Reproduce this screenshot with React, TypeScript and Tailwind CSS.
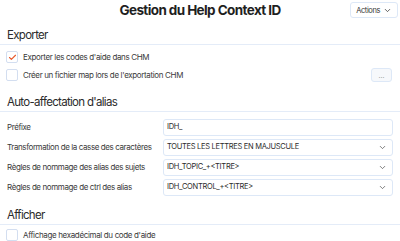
import { ChevronDown, Check } from 'lucide-react'

function Heading({ title }: { title: string }) {
  return (
    <div className="border-b border-[#e4ecf8] px-[7px] pb-[2px] text-[11.5px] leading-[14px] tracking-[-0.7px] text-[#2b2b2b]">
      {title}
    </div>
  )
}

function CheckRow({ label, checked }: { label: string; checked?: boolean }) {
  return (
    <div className="flex h-[18px] items-center gap-[5px] px-[6px]">
      <span className="flex h-[12px] w-[12px] items-center justify-center rounded-[2px] border border-[#d3def0] bg-white">
        {checked && <Check className="h-[9px] w-[9px] text-[#e8592b]" strokeWidth={3} />}
      </span>
      <span className="text-[8px] tracking-[-0.35px] text-[#3a3a3a]">{label}</span>
    </div>
  )
}

function FieldRow({ label, value, select }: { label: string; value: string; select?: boolean }) {
  return (
    <div className="grid h-[20px] grid-cols-[156px_1fr] items-center px-[7px]">
      <span className="text-[8px] tracking-[-0.4px] text-[#3a3a3a]">{label}</span>
      <div className="flex h-[17px] items-center justify-between rounded-[3px] border border-[#dde8f7] bg-white pl-[3px] pr-[5px] text-[7.5px] tracking-[-0.3px] text-[#2b2b2b]">
        <span>{value}</span>
        {select && <ChevronDown className="h-[9px] w-[9px] text-[#555]" strokeWidth={2} />}
      </div>
    </div>
  )
}

export default function App() {
  return (
    <div className="h-[241px] w-[400px] overflow-hidden bg-white font-['Inter',sans-serif]">
      <div className="grid h-[20px] grid-cols-[1fr_auto_1fr] items-center">
        <div />
        <div className="text-[13.5px] font-bold tracking-[-0.6px] text-[#1f1f1f]">Gestion du Help Context ID</div>
        <div className="flex justify-end pr-[2px]">
          <button className="flex h-[16px] items-center gap-[3px] rounded-[3px] border border-[#dde8f7] bg-white px-[5px] text-[7.5px] tracking-[-0.4px] text-[#333]">
            Actions
            <ChevronDown className="h-[9px] w-[9px]" strokeWidth={2} />
          </button>
        </div>
      </div>

      <div className="mt-[8px]">
        <Heading title="Exporter" />
        <div className="pt-[3px]">
          <CheckRow label="Exporter les codes d'aide dans CHM" checked />
          <div className="flex items-center justify-between pr-[8px]">
            <CheckRow label="Créer un fichier map lors de l'exportation CHM" />
            <button className="flex h-[14px] w-[21px] items-center justify-center rounded-[3px] border border-[#dde8f7] bg-[#f6f8fb] text-[7px] leading-none text-[#999]">
              ...
            </button>
          </div>
        </div>
      </div>

      <div className="mt-[11px]">
        <Heading title="Auto-affectation d'alias" />
        <div className="pt-[5px]">
          <FieldRow label="Préfixe" value="IDH_" />
          <FieldRow label="Transformation de la casse des caractères" value="TOUTES LES LETTRES EN MAJUSCULE" select />
          <FieldRow label="Règles de nommage des alias des sujets" value="IDH_TOPIC_+<TITRE>" select />
          <FieldRow label="Règles de nommage de ctrl des alias" value="IDH_CONTROL_+<TITRE>" select />
        </div>
      </div>

      <div className="mt-[11px]">
        <Heading title="Afficher" />
        <div className="pt-[1px]">
          <CheckRow label="Affichage hexadécimal du code d'aide" />
        </div>
      </div>
    </div>
  )
}
